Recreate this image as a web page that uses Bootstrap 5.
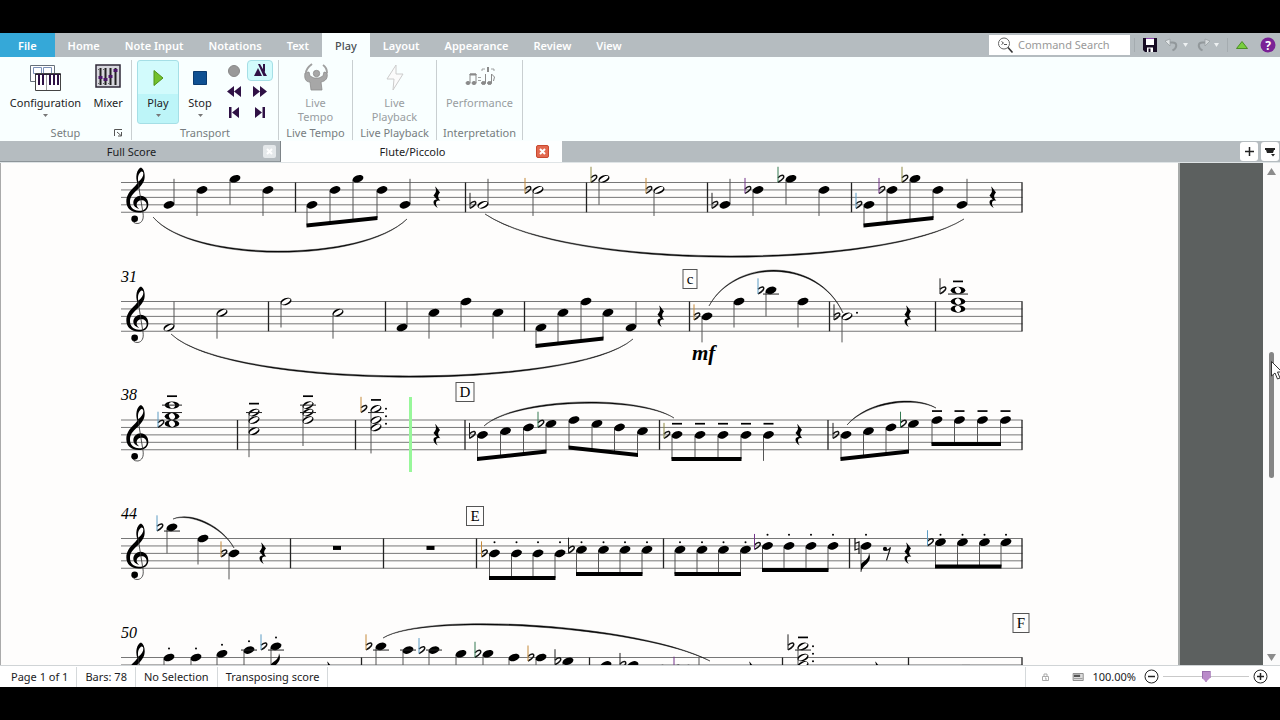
<!DOCTYPE html>
<html lang="en">
<head>
<meta charset="utf-8">
<meta name="viewport" content="width=device-width, initial-scale=1">
<title>Flute/Piccolo</title>
<link href="https://cdn.jsdelivr.net/npm/bootstrap@5.3.0/dist/css/bootstrap.min.css" rel="stylesheet">
<style>
:root{--bar:#b5bcc0;--panel:#f9ffff;--ink:#1c1c24;--dim:#8a8f91;--violet:#2f1145}
body{background:#000;padding:33px 0;min-height:100vh;font-family:"Noto Sans","Open Sans",sans-serif;font-size:11px;line-height:14px;color:var(--ink)}
button{border:0;background:none;padding:0;color:inherit;font:inherit}
.tabs-row{background:var(--bar);height:24px}
.tabs-row .nav{gap:1px}
.tabs-row .nav-link{color:#fff;font-weight:600;padding:1px 12px 0;line-height:24px;border-radius:0;height:24px}
.tabs-row .nav-link.file{background:#35a8d8;padding:1px 18px 0}
.tabs-row .nav-link.active{background:var(--panel);color:#4a5054;font-weight:500;padding:1px 13px 0}
.search-box{width:141px;height:20px;background:#fff}
.search-box input{border:0;outline:0;background:none;width:112px;padding:0;font-size:11px;line-height:18px}
.search-box input::placeholder{color:#999;opacity:1;font-weight:400}
.rule{width:1px;background:#a5acb0;height:14px}
.ribbon{background:var(--panel);height:84px;padding-top:3px}
.rgroup{border-right:1px solid #c9cfd1;height:80px;position:relative}
.rgroup .gname{color:#777d80;text-align:center;line-height:14px;height:14px}
.g-setup{width:132px}.g-transport{width:147px}.g-tempo{width:74px}.g-playback{width:84px}.g-perf{width:86px}
.g-transport .tools{padding-left:5px}
.big{height:64px;border-radius:3px;border:1px solid transparent;display:flex;flex-direction:column;align-items:center;justify-content:flex-start;line-height:14px}
.big svg.ic{height:32px;width:34px;margin-bottom:3px;flex:none}
.big svg.slim{width:24px}
.big.off{color:#989d9f}
.big.on{background:linear-gradient(#d2fbfc 0 54%,#bdf5f8 54%);border-color:#a5dfe6}
.small-grid{display:grid;grid-template-columns:26px 26px;grid-auto-rows:21px;gap:0}
.small-grid button{display:flex;align-items:center;justify-content:center;border-radius:4px;border:1px solid transparent}
.small-grid .on{background:#d2fbfc;border-color:#a5dfe6}
.launcher{position:absolute;right:8px;bottom:3px;line-height:0}
.docs{background:var(--bar);height:22px;border-bottom:1px solid #dfe4e6}
.doc{width:281px;height:21px;padding-top:1px;line-height:20px;border-right:1px solid #7d8488;border-bottom:1px solid #8d9599}
.doc.current{background:#fdffff;border-color:#fff}
.doc .x{width:13px;height:13px;border-radius:2px;background:#e4e8ea;line-height:0;display:flex;align-items:center;justify-content:center}
.doc.current .x{background:#e2694f;border:1px solid #c9492f}
.minis{gap:3px;padding:1px 1px 0 0}
.mini{background:#fff;border-radius:3px;width:18px;height:19px;display:flex;align-items:center;justify-content:center}
.view{background:#5c605f}
.paper{background:#fefdfc;border-left:1px solid #aaa;border-right:2px solid #a8abaa}
.paper svg{display:block;width:100%;height:auto}
.gutter{width:83px}
.vbar{width:17px;background:#fbfbfb;padding:5px 0 4px}
.vbar .thumb{width:5px;height:126px;border-radius:3px;background:#858585}
.pointer{position:absolute;left:2px;top:9px}
.status{background:#fff;height:22px;border-top:1px solid #d0d4d6;line-height:20px;padding-left:3px}
.status .seg{border-right:1px solid #d5d9db;line-height:20px}
.zoom{appearance:none;width:86px;height:14px;background:linear-gradient(#c9c9c9,#c9c9c9) center/100% 1px no-repeat;margin:0}
.zoom::-webkit-slider-thumb{appearance:none;width:9px;height:11px;background:#b98bc9;border:1px solid #9a6fae;clip-path:polygon(0 0,100% 0,100% 60%,50% 100%,0 60%)}
.zoom::-moz-range-thumb{width:9px;height:11px;background:#b98bc9;border:1px solid #9a6fae;border-radius:0}
.barnum{font:italic 16px "Liberation Serif",serif}
.mark-letter{font:15px "Liberation Serif",serif;text-anchor:middle}
.dynamic{font:italic bold 21px "Liberation Serif",serif}
</style>
</head>
<body class="d-flex flex-column">
<header>
  <div class="tabs-row d-flex align-items-center">
    <nav class="nav flex-nowrap text-nowrap" aria-label="Ribbon">
      <a class="nav-link file" href="#">File</a>
      <a class="nav-link" href="#">Home</a>
      <a class="nav-link" href="#">Note Input</a>
      <a class="nav-link" href="#">Notations</a>
      <a class="nav-link" href="#">Text</a>
      <a class="nav-link active" href="#" aria-current="page">Play</a>
      <a class="nav-link" href="#">Layout</a>
      <a class="nav-link" href="#">Appearance</a>
      <a class="nav-link" href="#">Review</a>
      <a class="nav-link" href="#">View</a>
    </nav>
    <label class="search-box d-flex align-items-center ms-auto ps-1">
      <svg class="mx-1" width="17" height="16" viewBox="0 0 17 16" fill="none" stroke="#333"><circle cx="7" cy="6.500" r="5.500" stroke="#666"/><path d="M11 10.500l4.500 5" stroke-width="1.600"/><path d="M4.500 4.500l2 1.500-2 1.500M7 7.500h3" stroke="#555"/></svg>
      <input type="text" placeholder="Command Search" aria-label="Command Search">
    </label>
    <div class="d-flex align-items-center ps-1">
      <span class="rule me-1"></span>
      <button class="ms-1" aria-label="Save"><svg class="d-block" width="14" height="14" viewBox="0 0 14 14"><path d="M0 0h14v14H2L0 12z" fill="#160b22"/><path d="M3 1h8v6H3zM4 9.500h6V14H4z" fill="#fff"/><path d="M5.500 10.500h2V14h-2z" fill="#160b22"/><path d="M3 0h8v1H3z" fill="#8e44ad"/></svg></button>
      <button class="ms-2" aria-label="Undo"><svg class="d-block" width="14" height="14" viewBox="0 0 14 14" fill="none" stroke="#92989b"><path d="M3 4.500h4.500c5 0 5 5 0 8" stroke-width="2"/><path d="M5 1v7L0 3z" fill="#e2e6e8" stroke="#999fa2" stroke-width=".8"/></svg></button>
      <button class="ms-1" aria-label="Undo history"><svg class="d-block" width="5" height="4" viewBox="0 0 5 4"><path d="M0 0h5L2.500 4z" fill="#eef1f2"/></svg></button>
      <button class="ms-2" aria-label="Redo"><svg class="d-block" width="14" height="14" viewBox="0 0 14 14" fill="none" stroke="#92989b"><path d="M11 4.500H6.500c-5 0-5 5 0 8" stroke-width="2"/><path d="M9 1v7l5-5z" fill="#d5dadc" stroke="#999fa2" stroke-width=".8"/></svg></button>
      <button class="ms-1" aria-label="Redo history"><svg class="d-block" width="5" height="4" viewBox="0 0 5 4"><path d="M0 0h5L2.500 4z" fill="#eef1f2"/></svg></button>
      <span class="rule mx-2"></span>
      <button aria-label="Collapse ribbon"><svg class="d-block" width="12" height="8" viewBox="0 0 12 8"><path d="M6 .5L11.500 7.500H.5z" fill="#79cf3e" stroke="#4c8d26"/></svg></button>
      <button class="ms-2 ps-1 me-1" aria-label="Help"><svg class="d-block" width="16" height="16" viewBox="0 0 16 16"><circle cx="8" cy="8" r="7.500" fill="#7a2196"/><text x="8" y="12.500" font-size="12" font-weight="700" fill="#fff" text-anchor="middle">?</text></svg></button>
    </div>
  </div>

  <div class="ribbon d-flex">
    <section class="rgroup g-setup d-flex flex-column justify-content-between">
      <div class="d-flex justify-content-center ps-1">
        <button class="big px-1"><svg class="ic" viewBox="0 0 34 32"><g fill="#fff" stroke="#66707a"><path d="M2.500 4.500h24v16h-24z"/><path d="M5.500 6.500h8v6h-8zM15.500 6.500h8v6h-8z" stroke="#7b91b8"/><path d="M7.500 12.500h25v17h-25z" stroke="#444"/></g><path d="M7 13h26v1H7z" fill="#2b2735"/><path d="M10 13h2v11h-2zM14 13h2v11h-2zM21 13h2v11h-2zM25 13h2v11h-2zM29 13h2v11h-2z" fill="#2f1145"/><path d="M18.500 14v15" stroke="#777" stroke-width=".7"/></svg>Configuration<svg class="mt-1" width="5" height="3" viewBox="0 0 5 3"><path d="M0 0h5L2.500 3z" fill="#777"/></svg></button>
        <button class="big px-1"><svg class="ic" viewBox="0 0 34 32"><path d="M5 4h24v22H5z" fill="#d6d6dd" stroke="#2f2a38" stroke-width="1.500"/><path d="M9.500 7v17M14.500 7v17M19.500 7v17M24.500 7v17" stroke="#222" stroke-width="2"/><path d="M7.500 15h4v3h-4zM12.500 17h4v3h-4zM17.500 14h4v3h-4zM22.500 8h4v3h-4z" fill="#4b1768"/><path d="M7 8h1v1H7zM7 22h1v1H7zM12 22h1v1h-1zM17 22h1v1h-1zM12 8h1v1h-1z" fill="#666"/></svg>Mixer</button>
      </div>
      <div class="gname">Setup</div>
      <button class="launcher" aria-label="Setup options"><svg width="9" height="8" viewBox="0 0 9 8" fill="none" stroke="#555"><path d="M.5 7V.5H8M3 3l4 3.500M7.500 3v4H4"/></svg></button>
    </section>
    <section class="rgroup g-transport d-flex flex-column justify-content-between">
      <div class="tools d-flex">
        <button class="big on px-2"><svg class="ic slim" viewBox="5 0 24 32"><path d="M13 9.500l9 7.500-9 7.500z" fill="#73c02c" stroke="#4e9317"/></svg>Play<svg class="mt-1" width="5" height="3" viewBox="0 0 5 3"><path d="M0 0h5L2.500 3z" fill="#777"/></svg></button>
        <button class="big px-2"><svg class="ic slim" viewBox="5 0 24 32"><path d="M10.500 10.500h13v13h-13z" fill="#0f5193" stroke="#0b3b70"/></svg>Stop<svg class="mt-1" width="5" height="3" viewBox="0 0 5 3"><path d="M0 0h5L2.500 3z" fill="#777"/></svg></button>
        <div class="small-grid">
          <button aria-label="Record"><svg width="12" height="12" viewBox="0 0 12 12"><circle cx="6" cy="6" r="5.500" fill="#999" stroke="#888"/></svg></button>
          <button class="on" aria-label="Click"><svg width="13" height="13" viewBox="0 0 13 13"><path d="M0 12L4 4l4 8zM4 0h2l7 12H9.500zM9 0h2v8L9 6z" fill="#2f1145"/></svg></button>
          <button aria-label="Rewind"><svg width="14" height="11" viewBox="0 0 14 11"><path d="M7 0v11L0 5.500zM14 0v11L7 5.500z" fill="#2f1145"/></svg></button>
          <button aria-label="Fast forward"><svg width="14" height="11" viewBox="0 0 14 11"><path d="M7 0v11l7-5.500zM0 0v11l7-5.500z" fill="#2f1145"/></svg></button>
          <button aria-label="Move to start"><svg width="10" height="11" viewBox="0 0 10 11"><path d="M0 0h2.500v11H0zM10 0v11L3 5.500z" fill="#2f1145"/></svg></button>
          <button aria-label="Move to end"><svg width="10" height="11" viewBox="0 0 10 11"><path d="M7.500 0H10v11H7.500zM0 0v11l7-5.500z" fill="#2f1145"/></svg></button>
        </div>
      </div>
      <div class="gname">Transport</div>
    </section>
    <section class="rgroup g-tempo d-flex flex-column justify-content-between">
      <button class="big off" disabled><svg class="ic" viewBox="0 0 34 32"><g fill="#a7a7a7" stroke="#8c8c8c" stroke-width=".8"><path d="M6 12l4-1 1 4 4 2h5l4-2 1-4 3 1c1 5-1 8-6 9l1 8H12l-1-8C7 21 5 18 6 12z"/><circle cx="17.500" cy="12.500" r="3.200"/></g><path d="M7 12C7 8 9 6 13 3M28 12c0-4-1-6-4-8" fill="none" stroke="#a0a0a0" stroke-width="2"/></svg>Live<br>Tempo</button>
      <div class="gname text-nowrap">Live Tempo</div>
    </section>
    <section class="rgroup g-playback d-flex flex-column justify-content-between">
      <button class="big off" disabled><svg class="ic" viewBox="0 0 34 32"><path d="M18 4L9 18h7l-1 11 10-16h-7z" fill="#fbfbfb" stroke="#ccc"/></svg>Live<br>Playback</button>
      <div class="gname text-nowrap">Live Playback</div>
    </section>
    <section class="rgroup g-perf d-flex flex-column justify-content-between">
      <button class="big off" disabled><svg class="ic" viewBox="0 0 34 32"><g fill="#8a8a8a" stroke="#8a8a8a"><ellipse cx="5" cy="22" rx="2" ry="1.500"/><ellipse cx="11" cy="22" rx="2" ry="1.500"/><path d="M7 22v-9h6v9" fill="none"/><path d="M7 13h6v1H7z"/><path d="M15 16.500h3M15 19.500h3" stroke-width=".8"/><ellipse cx="20.500" cy="22" rx="2" ry="1.500"/><path d="M22.500 22v-9M28.500 22v-9l3 3-1 4" fill="none"/><ellipse cx="26.500" cy="22" rx="2" ry="1.500"/><path d="M19 10V8h3M31 10V8h-3" fill="none" stroke-width=".8"/><path d="M24 6h2v5h-2z" stroke="none"/></g></svg>Performance</button>
      <div class="gname text-nowrap">Interpretation</div>
    </section>
  </div>

  <div class="docs d-flex">
    <div class="doc d-flex align-items-center">
      <span class="flex-grow-1 text-center">Full Score</span>
      <button class="x me-1" aria-label="Close Full Score"><svg width="7" height="7" viewBox="0 0 7 7"><path d="M1 1l5 5M6 1L1 6" stroke="#fff" stroke-width="2"/></svg></button>
    </div>
    <div class="doc current d-flex align-items-center">
      <span class="flex-grow-1 text-center ps-2">Flute/Piccolo</span>
      <button class="x me-2" aria-label="Close Flute/Piccolo"><svg width="7" height="7" viewBox="0 0 7 7"><path d="M1 1l5 5M6 1L1 6" stroke="#fff" stroke-width="2"/></svg></button><span class="pe-1"></span>
    </div>
    <div class="minis d-flex ms-auto">
      <button class="mini" aria-label="New tab"><svg width="9" height="9" viewBox="0 0 9 9"><path d="M4.500 0v9M0 4.500h9" stroke="#222" stroke-width="1.500"/></svg></button>
      <button class="mini" aria-label="Tab list"><svg width="10" height="10" viewBox="0 0 10 10"><path d="M0 1h10v2H9L8 6H2L1 3H0zM6 7h4L8 9.500z" fill="#222"/></svg></button>
    </div>
  </div>
</header>

<main class="view d-flex flex-grow-1">
  <div class="paper flex-grow-1">
    <svg id="score" viewBox="1 163 1177 502" role="img" aria-label="Flute/Piccolo score, bars 25 to 50">
      <defs>
        <g id="clef"><g transform="translate(-16 -45) scale(.3333)"><path fill-rule="evenodd" d="M93 23C101 27 105 40 104 52C103 68 93 78 82 90C68 103 60 112 60 126C60 142 70 153 87 153C101 153 110 146 110 136C110 127 104 121 95 121C86 121 80 127 80 135C80 140 83 144 88 147C77 145 70 138 70 129C70 117 80 108 92 108C106 108 115 119 115 133C115 149 103 158 86 158C64 158 49 145 49 125C49 108 58 96 70 84C75 79 79 74 82 70C79 60 78 52 80 42C82 32 87 25 93 23ZM95 35C89 37 84 46 84 56C84 60 84 63 85 66C95 58 100 50 100 42C100 37 98 35 95 35Z"/><path d="M84 66L99 160C102 178 96 189 84 191C74 192 66 186 66 178" fill="none" stroke="#333" stroke-width="2.500"/><circle cx="74" cy="177" r="10"/></g></g>
        <ellipse id="q" rx="5.600" ry="3.500" transform="rotate(-20)"/>
        <g id="h"><ellipse rx="5.700" ry="3.500" transform="rotate(-20)"/><ellipse rx="4.900" ry="1.900" transform="rotate(-30)" fill="#fefdfc"/></g>
        <g id="w"><ellipse rx="7.300" ry="3.700"/><ellipse rx="3.200" ry="2.800" transform="rotate(55)" fill="#fefdfc"/></g>
        <path id="flat" fill="none" stroke="#111" stroke-width="1.500" d="M-3 3.500C2 1 4 -2 2 -3.300C0 -4 -2 -2 -3 -1"/>
        <path id="nat" fill="none" stroke="#111" stroke-width="1.200" d="M-2 -8V4L2 2.500M2 8V-4L-2 -2.500"/>
        <path id="rest" d="M-1.500 -11L3 -5C.5 -2 .5 -.5 3.300 3.500C.5 2.500 -1 4 -1 6C-1 8 0 9 .7 10.700C-2.500 8.500 -3.500 6.500 -3.500 4.800C-3.500 2.800 -1.500 1.800 0 2.300L-3.500 -2C-1 -4.500 -.3 -7 -1.700 -10.500Z"/>
        <g id="rest8"><circle cx="-2" cy="-4.500" r="2.100"/><path d="M-2 -3C1 -3 2.500 -4 3.500 -6L-.5 7" fill="none" stroke="#111" stroke-width="1.200"/></g>
      </defs>
    </svg>
  </div>
  <div class="gutter flex-shrink-0"></div>
  <div class="vbar d-flex flex-column align-items-center flex-shrink-0" role="scrollbar" aria-controls="score" aria-valuenow="60" aria-orientation="vertical">
    <svg width="9" height="7" viewBox="0 0 9 7"><path d="M4.500 0L9 7H0z" fill="#8c8c8c"/></svg>
    <div class="thumb position-relative my-auto">
      <svg class="pointer" width="12" height="19" viewBox="0 0 12 19"><path d="M.5 .5V15l3.500-3 2.500 6 2.500-1-2.500-6H11z" fill="#fff" stroke="#333"/></svg>
    </div>
    <svg width="9" height="7" viewBox="0 0 9 7"><path d="M4.500 7L9 0H0z" fill="#8c8c8c"/></svg>
  </div>
</main>

<footer class="status d-flex align-items-center text-nowrap">
  <span class="seg px-2">Page 1 of 1</span>
  <span class="seg px-2">Bars: 78</span>
  <span class="seg px-2">No Selection</span>
  <span class="seg px-2">Transposing score</span>
  <span class="seg ms-auto">&nbsp;</span>
  <svg class="ms-3" width="8" height="9" viewBox="0 0 8 9" fill="none" stroke="#aaa"><path d="M.5 4.500h6v4h-6zM2 4V2h3v2M3 6h1v2"/></svg>
  <svg class="ms-3 ps-1" width="18" height="10" viewBox="0 0 18 10"><path d="M4 .5h13v9H4z" fill="#ddd" stroke="#777"/><path d="M5 2h8v3H5z" fill="#555"/><path d="M5 7h11" stroke="#888"/></svg>
  <label for="zoom" class="ms-2">100.00%</label>
  <button class="ms-2" aria-label="Zoom out"><svg class="d-block" width="15" height="15" viewBox="0 0 15 15" fill="none" stroke="#222"><circle cx="7.500" cy="7.500" r="6.500"/><path d="M4 7.500h7" stroke-width="1.500"/></svg></button>
  <input class="zoom mx-1" id="zoom" type="range" min="0" max="100" value="50">
  <button class="me-2 pe-1" aria-label="Zoom in"><svg class="d-block" width="15" height="15" viewBox="0 0 15 15" fill="none" stroke="#222"><circle cx="7.500" cy="7.500" r="6.500"/><path d="M4 7.500h7M7.500 4v7" stroke-width="1.500"/></svg></button>
</footer>

<script src="https://cdn.jsdelivr.net/npm/bootstrap@5.3.0/dist/js/bootstrap.bundle.min.js"></script>
<script>
// Positions count half staff spaces down from the top line.
// Note: [x, position(s), flags]  q/h/w head, u stem up, b flat, n natural, '.' staccato, '-' tenuto, d dotted, f flag
// Group: {y:[left beam, right beam], n:[notes]}
const HALF = 3.72;
const systems = [
 {top:182.5, bars:[295.5,465.5,586.5,707.5,851.5,1022], rests:[437,993], items:[
  [169,6,'qu'],[202,2,'q'],[235,-1,'q'],[268,2,'q'],
  {y:[225.5,218],n:[[312,6,''],[335,2,''],[358,-1,''],[382,2,'']]},[405,6,'qu'],
  [483,6,'hub'],[538,2,'hb'],[604,-1,'hb'],[659,2,'hb'],
  [725,6,'qub'],[758,2,'qb'],[791,-1,'qb'],[824,2,'q'],
  {y:[225.5,218],n:[[869,6,'b'],[892,2,'b'],[915,-1,'b'],[938,2,'']]},[962,6,'qu']]},
 {top:301.5, num:31, bars:[268.5,385.5,524.5,689.5,829.5,935.5,1022], rests:[661,908], items:[
  [169,7,'hu'],[222,3,'h'],[286,0,'h'],[338,3,'h'],
  [402,7,'qu'],[434,3,'q'],[466,0,'q'],[498,3,'q'],
  {y:[346,338.5],n:[[541,7,''],[563,3,''],[586,0,''],[608,3,'']]},[631,7,'qu'],
  [707,4,'qb'],[739,0,'q'],[771,-3,'qb'],[803,0,'q'],
  [847,4,'hbd'],[958,[-3,0,2],'w-b']]},
 {top:420, num:38, bars:[237.5,355.5,465,659.5,828,1022], rests:[437,799], items:[
  [172,[-4,-1,1],'w-'],[254,[-2,0,3],'h-'],[308,[-4,-2,0],'h-'],[376,[-3,0,2],'h-Bd'],
  {y:[459,451.5],n:[[482.5,4,'b'],[505.5,3,''],[528.5,2,''],[551,1,'b']]},
  {y:[447.5,455],n:[[574,0,''],[597,1,''],[619.5,2,''],[642.5,3,'']]},
  {y:[459,459],n:[[677,4,'b-'],[700,4,'-'],[723,4,'-'],[746,4,'-']]},[768.5,4,'q-'],
  {y:[459,451.5],n:[[846,4,'b'],[868.5,3,''],[891,2,''],[913.5,1,'b']]},
  {y:[444,444],n:[[937,0,'-'],[959.5,0,'-'],[982.5,0,'-'],[1005.5,0,'-']]}]},
 {top:538.5, num:44, bars:[290.5,383.5,476.5,663.5,849.5,1022], rests:[263,908], whole:[337,430.5], items:[
  [172,-3,'qB'],[203,0,'q'],[234,4,'qb'],
  {y:[578,578],n:[[494.5,4,'b.'],[516.5,4,'.'],[538,4,'.'],[560,4,'.']]},
  {y:[574,574],n:[[581.5,3,'b.'],[603.5,3,'.'],[625,3,'.'],[647,3,'.']]},
  {y:[574,574],n:[[680,3,'.'],[702,3,'.'],[723.5,3,'.'],[745.5,3,'.']]},
  {y:[570,570],n:[[767.5,2,'b.'],[789,2,'.'],[811,2,'.'],[833,2,'.']]},
  [866,2,'qnf.'],
  {y:[566.5,566.5],n:[[940.5,1,'b.'],[962.5,1,'.'],[984.5,1,'.'],[1006,1,'.']]}]},
 {top:657.5, num:50, bars:[361.5,589.5,782.5,908.5,1022], rests:[329,751,877], whole:[966], items:[
  [169,0,'q.'],[196,0,'q.'],[222,-1,'q.'],[249,-2,'q.'],[276,-3,'qBf.'],
  [381,-3,'qB'],[408,-2,'q'],[434,-2,'qB'],[461,-1,'q'],[488,-1,'qb'],[514,0,'q'],[541,0,'qb'],[568,1,'qb'],
  [606,2,'q'],[633,2,'qb'],[661,3,'q'],[687,3,'qb'],[694,7,'qu'],[803,[-3,0,2],'h-Bd']]}
];
// Slurs: start, two control points, end
const slurs = [
 [153,217,192,262,362,262,407,219],[485,214,570,270,885,268,964,219],
 [171,334,230,389,575,389,633,339],[709,306,735,257,818,257,843,313],
 [484,426,515,397,638,394,674,418],[847,425,868,400,915,395,936,408],
 [173,519,190,511,222,525,234,548],[383,638,425,611,640,624,710,661]];
const marks = [['c',690,269,14,284],['D',465,382,18,397],['E',475,506,17,521],['F',1021,613,16,628]];

const svg = document.getElementById('score');
const out = [];
const use = (id,x,y) => out.push(`<use href="#${id}" x="${x}" y="${y}"/>`);
const line = (x1,y1,x2,y2,c='#555',w=1) => out.push(`<path d="M${x1} ${y1}L${x2} ${y2}" stroke="${c}" stroke-width="${w}"/>`);
// Colour of each flat's stem, in drawing order
const tint = {k:'#222',o:'#c58a3a',y:'#8f8a45',g:'#347a52',t:'#5c9cc4',p:'#75358a'};
const flatTints = [...'koyokpgtpy'+'otkk'+'tokgykg'+'tookpt'+'totgokkpk'];

function drawNote(s,[x,pos,f],beamY){
  const ps = [].concat(pos), y = p => s.top + p*HALF;
  const head = f.includes('h') ? 'h' : f.includes('w') ? 'w' : 'q';
  const hi = ps[0], lo = ps[ps.length-1];
  const ledge = head==='w' ? 10 : 8;
  if (head !== 'w') {
    if (f.includes('u')) line(x+5,y(lo)-1,x+5,y(hi)-26);
    else line(x-5,y(hi)+1,x-5,beamY ?? y(lo)+26);
  }
  ps.forEach(p => use(head,x,y(p)));
  for (let l=-2; l>=hi; l-=2) line(x-ledge,y(l),x+ledge,y(l),'#222');
  const flat = (fx,p) => { use('flat',fx,y(p)); line(fx-3,y(p)-12,fx-3,y(p)+3.5,tint[flatTints.shift()]); };
  if (f.includes('b')) flat(x-(head==='w'?15:10),hi);
  if (f.includes('B')) flat(x-12,hi);
  if (s.num===38 && head==='w') flat(x-11,lo);
  if (f.includes('n')) use('nat',x-9,y(2));
  const above = hi>0 ? (hi%2 ? hi-2 : hi-3) : hi-2.4;
  if (f.includes('.')) out.push(`<circle cx="${x}" cy="${y(above)}" r="1"/>`);
  if (f.includes('-')) line(x-5,y(above),x+5,y(above),'#000',1.7);
  if (f.includes('d')) (ps.length>1 ? [-3,-1,1] : [hi-1]).forEach(p => out.push(`<circle cx="${x+10}" cy="${y(p)}" r="1"/>`));
  if (f.includes('f')) { const b=y(lo)+26; out.push(`<path d="M${x-5} ${b}C${x-3} ${b-8} ${x+7} ${b-9} ${x+3} ${b-19}C${x+3} ${b-12} ${x-3} ${b-11} ${x-5} ${b-8}Z"/>`); }
}
systems.forEach(s => {
  for (let i=0;i<5;i++) line(121,s.top+i*HALF*2,1022.5,s.top+i*HALF*2,'#777');
  use('clef',126,s.top+HALF*6);
  if (s.num) out.push(`<text class="barnum" x="121" y="${s.top-20}">${s.num}</text>`);
  s.bars.forEach(x => line(x,s.top,x,s.top+HALF*8,'#222',1.3));
  s.rests.forEach(x => use('rest',x,s.top+HALF*4));
  (s.whole||[]).forEach(x => out.push(`<rect x="${x-4}" y="${s.top+HALF*2}" width="8" height="4"/>`));
  s.items.forEach(it => {
    if (Array.isArray(it)) return drawNote(s,it);
    const a = it.n[0][0]-5, b = it.n[3][0]-5, [ya,yb] = it.y;
    it.n.forEach(n => drawNote(s,n,ya+(yb-ya)*(n[0]-5-a)/(b-a)));
    out.push(`<path d="M${a-.5} ${ya-2}L${b+.5} ${yb-2}V${yb+2}L${a-.5} ${ya+2}Z"/>`);
  });
});
use('rest8',887,systems[3].top+HALF*4);
slurs.forEach(([a,b,c,d,e,f,g,h]) => {
  const k = 1.8;
  out.push(`<path d="M${a} ${b}C${c} ${d} ${e} ${f} ${g} ${h}C${e} ${f+k} ${c} ${d+k} ${a} ${b}Z" stroke="#222" stroke-width=".5"/>`);
});
marks.forEach(([t,x,y,w,base]) => out.push(`<rect x="${x-w/2}" y="${y+.5}" width="${w}" height="19" fill="none" stroke="#555"/><text class="mark-letter" x="${x}" y="${base}">${t}</text>`));
out.push('<text class="dynamic" x="692" y="360">mf</text><rect x="409" y="397" width="3" height="75" fill="#98f79a"/>');
svg.insertAdjacentHTML('beforeend',out.join(''));
</script>
</body>
</html>
